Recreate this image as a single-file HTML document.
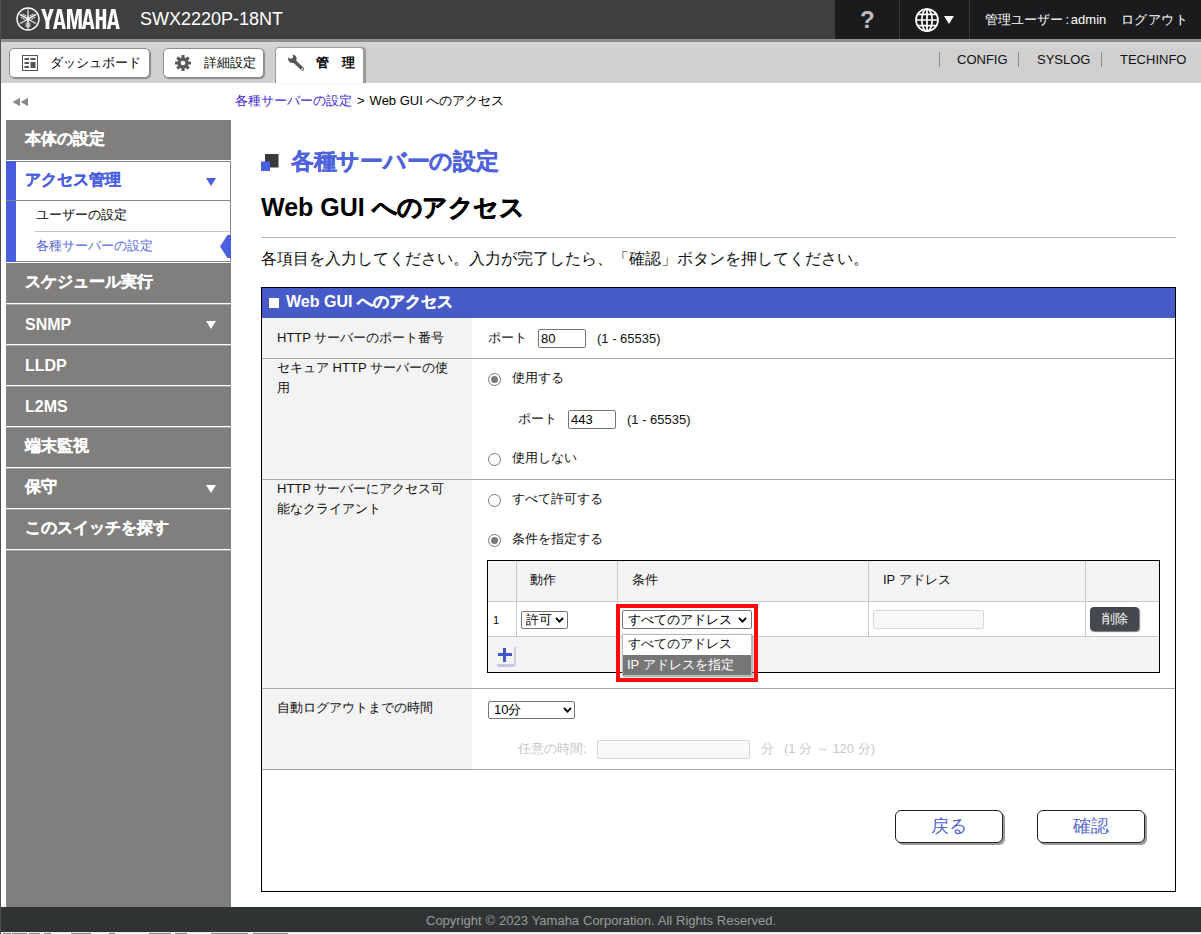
<!DOCTYPE html>
<html lang="ja"><head><meta charset="utf-8">
<style>
*{box-sizing:border-box;margin:0;padding:0}
html,body{width:1201px;height:934px;overflow:hidden;background:#fff}
body{font-family:"Liberation Sans",sans-serif;color:#000;position:relative;font-size:13px}
.a{position:absolute;white-space:nowrap}
#hdr{left:1px;top:0;width:1200px;height:39px;background:#3f3f3f}
#hdrR{left:835px;top:0;width:366px;height:39px;background:#1b1b1d}
.vs{top:0;width:1px;height:39px;background:#3a3a3c}
#hline{left:1px;top:39px;width:1200px;height:3px;background:linear-gradient(#969696,#888)}
#tabbar{left:1px;top:42px;width:1200px;height:41px;background:linear-gradient(#d6d6d6,#d0d0d0 8px)}
.tbtn{background:#fff;border:1px solid #8c8c8c;border-radius:5px;box-shadow:1px 1px 1px #8a8a8a;font-size:13px;height:30px;top:48px}
.tsep{top:52px;width:1px;height:15px;background:#8e8e8e}
.tl{top:52px;font-size:13px;color:#111;line-height:15px}
#side{left:6px;top:120px;width:225px;height:787px;background:#807f7d}
.mi{left:6px;width:225px;height:2px;background:#fff}
.mt{left:25px;color:#fff;font-weight:bold;font-size:16px;line-height:20px}
.cj{-webkit-text-stroke:.3px currentColor}
.arr{width:0;height:0;border-left:5px solid transparent;border-right:5px solid transparent;border-top:8px solid #fff;left:206px}
#foot{left:1px;top:907px;width:1200px;height:25px;background:#2f3333}
</style></head><body>
<!-- header -->
<div id="hdr" class="a"></div>
<div id="hdrR" class="a"></div>
<div class="a vs" style="left:899px"></div>
<div class="a vs" style="left:969px"></div>
<div id="hline" class="a"></div>
<div id="tabbar" class="a"></div>
<!-- logo -->
<svg class="a" style="left:15.5px;top:7px" width="24" height="24" viewBox="0 0 24 24"><circle cx="12" cy="12" r="11" fill="none" stroke="#fff" stroke-width="1.4"/><g stroke="#fff" stroke-width="1.5"><path d="M12 2.6V21.4M3.9 7.3L20.1 16.7M20.1 7.3L3.9 16.7"/></g><g stroke="#3f3f3f" stroke-width=".5"><path d="M12 2.6V8.5M3.9 16.7L9 13.7M20.1 16.7L15 13.7"/></g><g stroke="#fff" stroke-width=".9" fill="none"><path d="M10.2 15.5V20M13.8 15.5V20M10.6 9.2L6.6 7M8.8 12.3L4.8 10.1M13.4 9.2L17.4 7M15.2 12.3L19.2 10.1"/></g></svg>
<svg class="a" style="left:41px;top:9px" width="79" height="20" viewBox="0 0 80 20" preserveAspectRatio="none"><g fill="#fff" fill-rule="evenodd"><path transform="translate(0 0)" d="M0 0H4L6.5 8.5L9 0H13L8.4 12.5V20H4.6V12.5Z"/><path transform="translate(12.2 0)" d="M0 20L4.4 0H8.6L13 20H9.4L8.7 16H4.3L3.6 20ZM4.9 13H8.1L6.5 4.2Z"/><path transform="translate(26.3 0)" d="M0 20V0H5.1L7.5 13L9.9 0H15V20H11.7V4.5L8.9 20H6.1L3.3 4.5V20Z"/><path transform="translate(41.3 0)" d="M0 20L4.4 0H8.6L13 20H9.4L8.7 16H4.3L3.6 20ZM4.9 13H8.1L6.5 4.2Z"/><path transform="translate(55.5 0)" d="M0 0H3.6V7.8H6.9V0H10.5V20H6.9V11.2H3.6V20H0Z"/><path transform="translate(66.7 0)" d="M0 20L4.4 0H8.6L13 20H9.4L8.7 16H4.3L3.6 20ZM4.9 13H8.1L6.5 4.2Z"/></g></svg>
<div class="a" style="left:140px;top:8px;font-size:18px;color:#fff;line-height:22px">SWX2220P-18NT</div>
<div class="a" style="left:860px;top:6px;font-size:24px;font-weight:bold;color:#bdbdbd;line-height:28px">?</div>
<svg class="a" style="left:914px;top:8px" width="26" height="24" viewBox="0 0 26 24"><g fill="none" stroke="#fff" stroke-width="1.7"><circle cx="13" cy="12" r="11"/><ellipse cx="13" cy="12" rx="5.2" ry="11"/><path d="M13 1V23M2 12H24M3.6 6.3H22.4M3.6 17.7H22.4"/></g></svg>
<div class="a" style="left:944px;top:16px;width:0;height:0;border-left:5px solid transparent;border-right:5px solid transparent;border-top:8px solid #fff"></div>
<div class="a" style="left:985px;top:11px;font-size:13px;color:#fff;line-height:18px">管理ユーザー<span style="letter-spacing:-1px"> : </span>admin</div>
<div class="a" style="left:1121px;top:11px;font-size:13px;color:#fff;line-height:18px;letter-spacing:.4px">ログアウト</div>
<!-- tab bar -->
<div class="a tbtn" style="left:9px;width:141px"></div>
<svg class="a" style="left:22px;top:55px" width="16" height="16" viewBox="0 0 16 16"><rect x=".5" y=".5" width="15" height="15" fill="#fff" stroke="#555" stroke-width="1"/><g fill="#555"><rect x="2.5" y="3" width="4.5" height="2"/><rect x="2.5" y="7" width="4.5" height="2"/><rect x="2.5" y="11" width="4.5" height="2"/><rect x="8.5" y="3" width="5" height="2"/><rect x="8.5" y="7" width="5" height="6"/></g></svg>
<div class="a" style="left:50px;top:54px;font-size:13px;line-height:18px">ダッシュボード</div>
<div class="a tbtn" style="left:163px;width:101px"></div>
<svg class="a" style="left:175px;top:55px" width="16" height="16" viewBox="0 0 16 16"><g fill="#595959"><circle cx="8" cy="8" r="5.6"/><g id="t"><rect x="6.4" y="0" width="3.2" height="16" rx=".6"/></g><rect x="6.4" y="0" width="3.2" height="16" rx=".6" transform="rotate(45 8 8)"/><rect x="6.4" y="0" width="3.2" height="16" rx=".6" transform="rotate(90 8 8)"/><rect x="6.4" y="0" width="3.2" height="16" rx=".6" transform="rotate(135 8 8)"/></g><circle cx="8" cy="8" r="2.3" fill="#fff"/></svg>
<div class="a" style="left:204px;top:54px;font-size:13px;line-height:18px">詳細設定</div>
<div class="a" style="left:275px;top:47px;width:89px;height:36px;background:#fff;border:1px solid #9a9a9a;border-bottom:none;border-radius:4px 4px 0 0;box-shadow:2px 0 1px #999"></div>
<svg class="a" style="left:287px;top:54px" width="19" height="18" viewBox="0 0 19 18"><g fill="none" stroke="#555" stroke-linecap="round"><path d="M6.5 6.5L15.5 15" stroke-width="3.4"/></g><path d="M1.2 3.6 A4.3 4.3 0 1 0 5.6 .4 L6.2 3.4 L4 5 L1.2 3.6Z" fill="#555"/><circle cx="15.4" cy="15" r=".9" fill="#fff"/></svg>
<div class="a" style="left:316px;top:54px;font-size:13px;font-weight:bold;line-height:18px">管<span style="display:inline-block;width:13px"></span>理</div>
<div class="a tsep" style="left:939px"></div>
<div class="a tl" style="left:957px">CONFIG</div>
<div class="a tsep" style="left:1018px"></div>
<div class="a tl" style="left:1037px">SYSLOG</div>
<div class="a tsep" style="left:1101px"></div>
<div class="a tl" style="left:1120px">TECHINFO</div>
<!-- collapse arrows + breadcrumb -->
<svg class="a" style="left:12px;top:97px" width="17" height="10" viewBox="0 0 17 10"><path d="M8 .8V9.2L.6 5ZM16 .8V9.2L8.6 5Z" fill="#8a8a8a"/></svg>
<div class="a" style="left:235px;top:92px;font-size:13px;line-height:18px"><span style="color:#3a24dc">各種サーバーの設定</span><span style="margin:0 5px 0 5px">&gt;</span>Web GUI へのアクセス</div>
<!-- sidebar -->
<div id="side" class="a"></div>
<div class="a mt cj" style="top:129px">本体の設定</div>
<div class="a mi" style="top:160px;height:1px"></div>
<div class="a" style="left:6px;top:161px;width:225px;height:101px;background:#fff;border:1px solid #858585"></div>
<div class="a" style="left:6px;top:161px;width:10px;height:101px;background:#4a5fe0"></div>
<div class="a" style="left:6px;top:200px;width:225px;height:1px;background:#858585"></div>
<div class="a mt cj" style="top:170px;color:#4a5fe0">アクセス管理</div>
<div class="a arr" style="top:178px;border-top-color:#4a5fe0"></div>
<div class="a" style="left:36px;top:206px;font-size:13px;line-height:18px">ユーザーの設定</div>
<div class="a" style="left:35px;top:231px;width:195px;height:1px;background:#c4c4c4"></div>
<div class="a" style="left:36px;top:237px;font-size:13px;line-height:18px;color:#5566dd">各種サーバーの設定</div>
<svg class="a" style="left:220px;top:235px" width="11" height="23" viewBox="0 0 11 23"><path d="M0 11.5L7.5 0H11V23H7.5Z" fill="#4a5fe0"/></svg>
<div class="a mi" style="top:262px;height:1px"></div>
<div class="a mt cj" style="top:272px">スケジュール実行</div>
<div class="a mi" style="top:303px;height:1px"></div><div class="a mi" style="top:304px;height:1px;opacity:.3"></div>
<div class="a mt" style="top:315px">SNMP</div><div class="a arr" style="top:321px"></div>
<div class="a mi" style="top:344px;height:1px"></div><div class="a mi" style="top:345px;height:1px;opacity:.3"></div>
<div class="a mt" style="top:356px">LLDP</div>
<div class="a mi" style="top:385px;height:1px"></div><div class="a mi" style="top:386px;height:1px;opacity:.3"></div>
<div class="a mt" style="top:397px">L2MS</div>
<div class="a mi" style="top:426px;height:1px"></div><div class="a mi" style="top:427px;height:1px;opacity:.3"></div>
<div class="a mt cj" style="top:436px">端末監視</div>
<div class="a mi" style="top:467px;height:1px"></div><div class="a mi" style="top:468px;height:1px;opacity:.3"></div>
<div class="a mt cj" style="top:477px">保守</div><div class="a arr" style="top:485px"></div>
<div class="a mi" style="top:508px;height:1px"></div><div class="a mi" style="top:509px;height:1px;opacity:.3"></div>
<div class="a mt cj" style="top:518px">このスイッチを探す</div>
<div class="a mi" style="top:549px;height:1px"></div><div class="a mi" style="top:550px;height:1px;opacity:.3"></div>
<!-- MAIN -->
<style>
.lb{left:277px;font-size:13px;line-height:20px;color:#111}
.tx{font-size:13px;line-height:18px;color:#111}
.rl{left:262px;width:913px;height:1px;background:#a8a8a8}
.lbg{left:262px;width:210px;background:#f3f3f3}
.rad{width:13px;height:13px;border:1px solid #767676;border-radius:50%;background:#fff}
.rad.on::after{content:"";position:absolute;left:2px;top:2px;width:7px;height:7px;border-radius:50%;background:#7a7a7a}
.inp{height:19px;border:1px solid #767676;border-radius:2px;background:#fff;font-size:13px;line-height:17px;padding-left:2px}
.dis{border-color:#d8d8d8;background:#f8f8f8}
.sel{height:18px;border:1px solid #767676;border-radius:2px;background:#fff;font-size:13px;line-height:16px;padding-left:3px}
.chev{width:9px;height:6px}
.btn{top:810px;width:108px;height:33px;border:1px solid #222;border-radius:6px;background:#fff;box-shadow:2px 2px 0 #9a9a9a;font-size:18px;line-height:30px;text-align:center;color:#5566cc}
.gl{background:#c9c9c9;width:1px}
</style>
<svg class="a" style="left:261px;top:154px" width="18" height="17" viewBox="0 0 18 17"><rect x="4" y="0" width="13.5" height="13.5" fill="#3a3a3a"/><rect x="0" y="7.5" width="9" height="9.5" fill="#4a5fe0"/></svg>
<div class="a" style="left:291px;top:146px;font-size:23px;font-weight:bold;line-height:30px;color:#4d62dc;letter-spacing:-0.3px;-webkit-text-stroke:.3px #4d62dc">各種サーバーの設定</div>
<div class="a" style="left:261px;top:191px;font-size:25px;font-weight:bold;line-height:32px;color:#000">Web GUI <span style="letter-spacing:-0.6px;-webkit-text-stroke:0.5px #000">へのアクセス</span></div>
<div class="a" style="left:261px;top:237px;width:915px;height:1px;background:#b5b5b5"></div>
<div class="a" style="left:261px;top:248px;font-size:16px;line-height:22px;color:#111">各項目を入力してください。入力が完了したら、「確認」ボタンを押してください。</div>
<!-- outer table -->
<div class="a" style="left:261px;top:287px;width:915px;height:605px;border:1px solid #000;background:#fff"></div>
<div class="a" style="left:262px;top:288px;width:913px;height:30px;background:#475bc8"></div>
<div class="a" style="left:269px;top:298px;width:10px;height:10px;background:#fff"></div>
<div class="a" style="left:286px;top:292px;font-size:16px;font-weight:bold;line-height:20px;color:#fff">Web GUI <span style="-webkit-text-stroke:0.35px #fff">へのアクセス</span></div>
<!-- row1 -->
<div class="a lbg" style="top:318px;height:40px"></div>
<div class="a lb" style="top:328px">HTTP サーバーのポート番号</div>
<div class="a tx" style="left:488px;top:329px">ポート</div>
<div class="a inp" style="left:538px;top:329px;width:48px">80</div>
<div class="a tx" style="left:597px;top:330px">(1 - 65535)</div>
<div class="a rl" style="top:358px"></div>
<!-- row2 -->
<div class="a lbg" style="top:359px;height:120px"></div>
<div class="a lb" style="top:358px">セキュア HTTP サーバーの使<br>用</div>
<div class="a rad on" style="left:488px;top:373px"></div>
<div class="a tx" style="left:512px;top:369px">使用する</div>
<div class="a tx" style="left:518px;top:410px">ポート</div>
<div class="a inp" style="left:568px;top:410px;width:48px">443</div>
<div class="a tx" style="left:627px;top:411px">(1 - 65535)</div>
<div class="a rad" style="left:488px;top:453px"></div>
<div class="a tx" style="left:512px;top:449px">使用しない</div>
<div class="a rl" style="top:479px"></div>
<!-- row3 -->
<div class="a lbg" style="top:480px;height:208px"></div>
<div class="a lb" style="top:479px">HTTP サーバーにアクセス可<br>能なクライアント</div>
<div class="a rad" style="left:488px;top:494px"></div>
<div class="a tx" style="left:512px;top:490px">すべて許可する</div>
<div class="a rad on" style="left:488px;top:534px"></div>
<div class="a tx" style="left:512px;top:530px">条件を指定する</div>
<!-- inner table -->
<div class="a" style="left:487px;top:560px;width:673px;height:113px;border:1px solid #000;background:#f3f3f3"></div>
<div class="a" style="left:516px;top:601px;width:643px;height:35px;background:#fff"></div>
<div class="a" style="left:488px;top:601px;width:28px;height:35px;background:#fff"></div>
<div class="a" style="left:488px;top:601px;width:671px;height:1px;background:#c9c9c9"></div>
<div class="a" style="left:488px;top:636px;width:671px;height:1px;background:#c9c9c9"></div>
<div class="a gl" style="left:516px;top:561px;height:76px"></div>
<div class="a gl" style="left:617px;top:561px;height:76px"></div>
<div class="a gl" style="left:868px;top:561px;height:76px"></div>
<div class="a gl" style="left:1085px;top:561px;height:76px"></div>
<div class="a tx" style="left:530px;top:571px">動作</div>
<div class="a tx" style="left:632px;top:571px">条件</div>
<div class="a tx" style="left:883px;top:571px">IP アドレス</div>
<div class="a" style="left:493px;top:613px;font-size:11px;line-height:14px">1</div>
<div class="a sel" style="left:521px;top:611px;width:47px;padding-left:4px">許可</div>
<svg class="a chev" style="left:555px;top:617px" viewBox="0 0 9 6"><path d="M1 1L4.5 4.6L8 1" fill="none" stroke="#000" stroke-width="1.8"/></svg>
<div class="a sel" style="left:622px;top:610px;width:130px;height:19px;padding-left:5px;line-height:17px">すべてのアドレス</div>
<svg class="a chev" style="left:738px;top:617px" viewBox="0 0 9 6"><path d="M1 1L4.5 4.6L8 1" fill="none" stroke="#000" stroke-width="1.8"/></svg>
<div class="a inp dis" style="left:873px;top:610px;width:111px"></div>
<div class="a" style="left:1090px;top:607px;width:49px;height:24px;border-radius:4px;background:#45484e;box-shadow:1px 1px 1px #777;color:#fff;font-size:13px;line-height:23px;text-align:center">削除</div>
<!-- plus icon -->
<div class="a" style="left:497px;top:647px;width:19px;height:20px;border-right:2px solid #cfd0e2;border-bottom:3px solid #c4c6de;border-radius:0 0 4px 2px"></div>
<div class="a" style="left:498px;top:653px;width:14px;height:3px;background:#3f55c8"></div>
<div class="a" style="left:503px;top:648px;width:3px;height:14px;background:#3f55c8"></div>
<!-- dropdown -->
<div class="a" style="left:622px;top:634px;width:130px;height:42px;background:#fff;border:1px solid #b9b9b9;box-shadow:1px 1px 2px #999"></div>
<div class="a tx" style="left:628px;top:635px">すべてのアドレス</div>
<div class="a" style="left:623px;top:655px;width:128px;height:20px;background:#767676"></div>
<div class="a tx" style="left:627px;top:656px;color:#fff">IP アドレスを指定</div>
<div class="a" style="left:616px;top:604px;width:142px;height:78px;border:4px solid #f80a0e"></div>
<div class="a rl" style="top:688px"></div>
<!-- row4 -->
<div class="a lbg" style="top:689px;height:80px"></div>
<div class="a lb" style="top:698px">自動ログアウトまでの時間</div>
<div class="a sel" style="left:488px;top:701px;width:87px;padding-left:5px">10分</div>
<svg class="a chev" style="left:563px;top:707px" viewBox="0 0 9 6"><path d="M1 1L4.5 4.6L8 1" fill="none" stroke="#000" stroke-width="1.8"/></svg>
<div class="a tx" style="left:518px;top:740px;color:#c8c8c8">任意の時間:</div>
<div class="a inp dis" style="left:597px;top:740px;width:153px"></div>
<div class="a tx" style="left:761px;top:740px;color:#c8c8c8">分</div>
<div class="a tx" style="left:784px;top:740px;color:#c8c8c8">(1 分 ～ 120 分)</div>
<div class="a rl" style="top:769px"></div>
<div class="a btn" style="left:895px">戻る</div>
<div class="a btn" style="left:1037px">確認</div>

<!-- footer -->
<div id="foot" class="a"></div>
<div class="a" style="left:426px;top:913px;font-size:13px;line-height:16px;color:#9c9c9c;word-spacing:.3px">Copyright © 2023 Yamaha Corporation. All Rights Reserved.</div>
<div class="a" style="left:0;top:0;width:1px;height:934px;background:#505050"></div>
<div class="a" style="left:1px;top:932px;width:1200px;height:1px;background:#e4e5e5"></div>
<div class="a" style="left:3px;top:933px;width:8px;height:1px;background:#8c8c8c"></div><div class="a" style="left:12px;top:933px;width:15px;height:1px;background:#8c8c8c"></div><div class="a" style="left:29px;top:933px;width:11px;height:1px;background:#8c8c8c"></div><div class="a" style="left:44px;top:933px;width:7px;height:1px;background:#8c8c8c"></div><div class="a" style="left:71px;top:933px;width:20px;height:1px;background:#8c8c8c"></div><div class="a" style="left:109px;top:933px;width:6px;height:1px;background:#8c8c8c"></div><div class="a" style="left:149px;top:933px;width:22px;height:1px;background:#8c8c8c"></div><div class="a" style="left:175px;top:933px;width:12px;height:1px;background:#8c8c8c"></div><div class="a" style="left:211px;top:933px;width:37px;height:1px;background:#8c8c8c"></div><div class="a" style="left:253px;top:933px;width:35px;height:1px;background:#8c8c8c"></div>
</body></html>
